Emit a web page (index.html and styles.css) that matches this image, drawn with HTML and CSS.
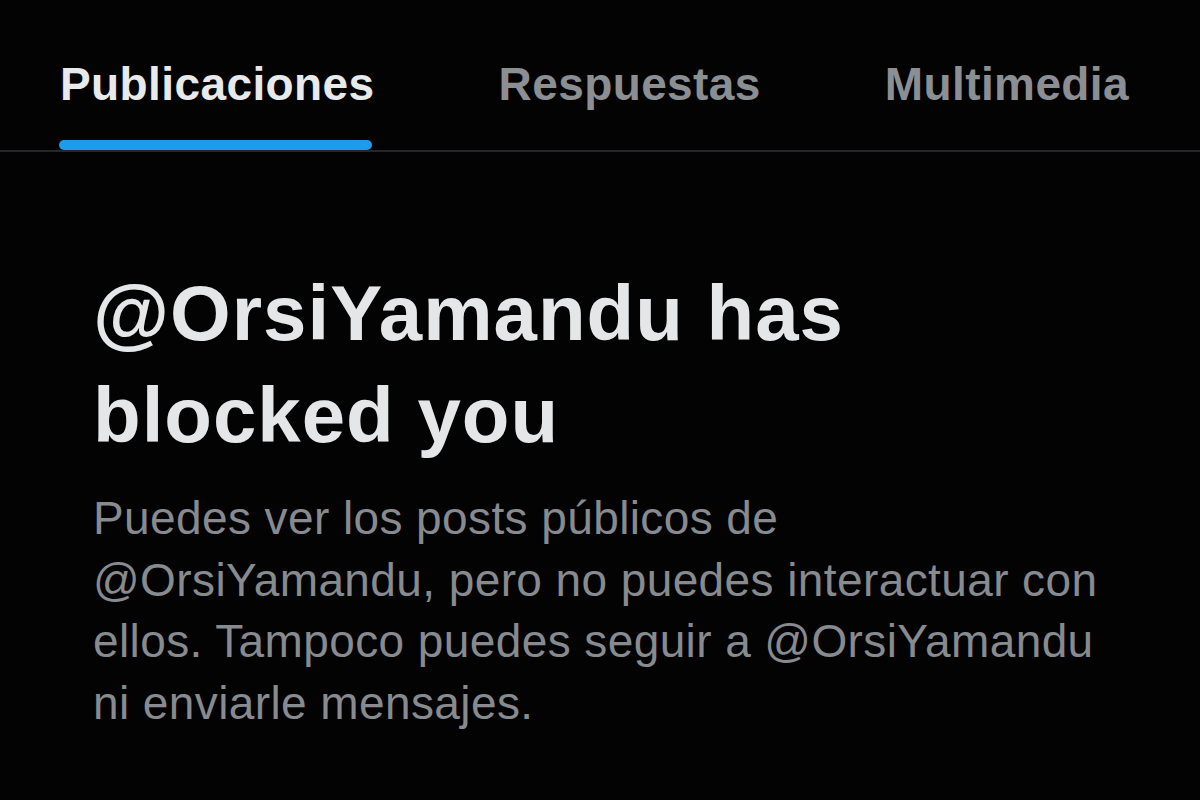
FILE: index.html
```html
<!DOCTYPE html>
<html lang="es">
<head>
<meta charset="utf-8">
<title>Bloqueado</title>
<link rel="stylesheet" href="styles.css">
</head>
<body>
<nav class="tabs">
  <div class="tab tab-active"><span class="tab-label">Publicaciones</span><span class="tab-bar"></span></div>
  <div class="tab"><span class="tab-label">Respuestas</span></div>
  <div class="tab"><span class="tab-label">Multimedia</span></div>
</nav>
<main class="blocked">
  <h1 class="blocked-title">@OrsiYamandu has<br>blocked you</h1>
  <p class="blocked-text">Puedes ver los posts públicos de<br>@OrsiYamandu, pero no puedes interactuar con<br>ellos. Tampoco puedes seguir a @OrsiYamandu<br>ni enviarle mensajes.</p>
</main>
</body>
</html>
```
FILE: styles.css
```css
html, body {
  margin: 0;
  padding: 0;
  background: #030303;
}
body {
  width: 1200px;
  height: 800px;
  overflow: hidden;
  font-family: "Liberation Sans", Arial, sans-serif;
}
.tabs {
  display: flex;
  gap: 124px;
  padding: 56px 0 0 60px;
  border-bottom: 2px solid #25272a;
  height: 94px;
}
.tab {
  display: flex;
  flex-direction: column;
}
.tab-label {
  font-size: 46px;
  line-height: 56px;
  font-weight: 700;
  letter-spacing: 0.4px;
  color: #8b8e92;
}
.tab-tab {
  display: none;
}
.tab-active .tab-label {
  color: #e8e9ea;
}
.tab-bar {
  margin: 28px 3px 0 -1px;
  height: 10px;
  border-radius: 5px;
  background: #1d9bf0;
}
.blocked {
  padding: 110px 0 0 93px;
}
.blocked-title {
  margin: 0;
  font-size: 78px;
  line-height: 102px;
  font-weight: 700;
  letter-spacing: 1px;
  color: #e5e6e7;
}
.blocked-text {
  margin: 22px 0 0;
  font-size: 46px;
  line-height: 61.5px;
  font-weight: 400;
  letter-spacing: 0.4px;
  color: #878a8e;
}
```
